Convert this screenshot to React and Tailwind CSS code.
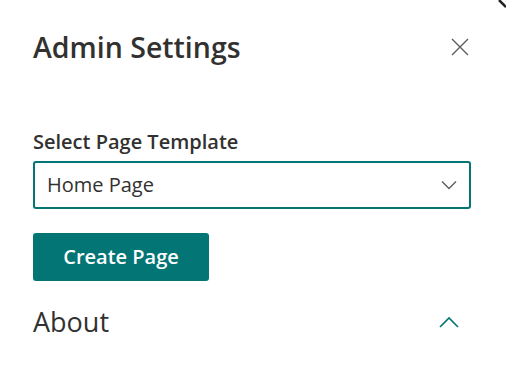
import React from 'react';

const font = { fontFamily: '"Open Sans", "Noto Sans", sans-serif' };

const App = () => {
  return (
    <div className="relative w-[506px] h-[386px] bg-white text-[#323130] overflow-hidden" style={font}>
      <svg className="absolute right-0 top-0" width="8" height="8" viewBox="0 0 8 8">
        <path d="M1 0 L8 7" stroke="#222" strokeWidth="2.5" />
      </svg>
      <div className="flex items-center justify-between pl-[33px] pr-[36px] pt-[27px]">
        <h1 className="text-[28.5px] font-semibold leading-[40px]">Admin Settings</h1>
        <button className="w-[20px] h-[20px] flex items-center justify-center text-[#605e5c]">
          <svg width="18" height="18" viewBox="0 0 18 18">
            <path d="M1 1 L17 17 M17 1 L1 17" stroke="currentColor" strokeWidth="1.4" />
          </svg>
        </button>
      </div>
      <div className="px-[33px] pt-[61px]">
        <label className="block text-[20px] font-semibold leading-[28px]">Select Page Template</label>
        <div className="mt-[5px] h-[48px] w-[438px] border-2 border-[#037575] rounded-[3px] flex items-center justify-between pl-[12px] pr-[12px]">
          <span className="text-[20px]">Home Page</span>
          <svg width="16" height="10" viewBox="0 0 16 10" className="text-[#605e5c]">
            <path d="M1 1.5 L8 8.5 L15 1.5" stroke="currentColor" strokeWidth="1.4" fill="none" />
          </svg>
        </div>
        <button className="mt-[24px] h-[48px] w-[176px] rounded-[3px] bg-[#037575] text-white text-[20px] font-semibold flex items-center justify-center">
          Create Page
        </button>
        <div className="mt-[21px] flex items-center justify-between pr-[14px]">
          <span className="text-[27px] leading-[40px]">About</span>
          <svg width="20" height="12" viewBox="0 0 20 12" className="text-[#037575]">
            <path d="M1 11 L10 2 L19 11" stroke="currentColor" strokeWidth="1.6" fill="none" />
          </svg>
        </div>
      </div>
    </div>
  );
};

export default App;
